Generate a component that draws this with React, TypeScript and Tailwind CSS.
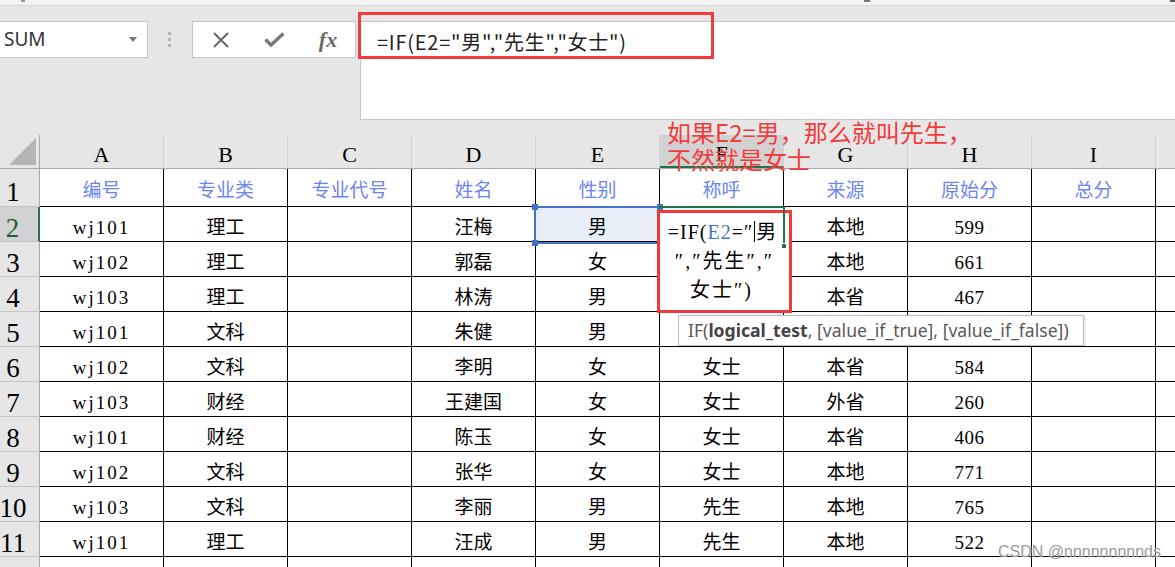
import React from 'react'

const SERIF = "font-['Liberation_Serif','Noto_Sans_CJK_SC',serif]"
const COLS = ['A', 'B', 'C', 'D', 'E', 'F', 'G', 'H', 'I']

const data: string[][] = [
  ['编号', '专业类', '专业代号', '姓名', '性别', '称呼', '来源', '原始分', '总分'],
  ['wj101', '理工', '', '汪梅', '男', '', '本地', '599', ''],
  ['wj102', '理工', '', '郭磊', '女', '', '本地', '661', ''],
  ['wj103', '理工', '', '林涛', '男', '', '本省', '467', ''],
  ['wj101', '文科', '', '朱健', '男', '先生', '本地', '512', ''],
  ['wj102', '文科', '', '李明', '女', '女士', '本省', '584', ''],
  ['wj103', '财经', '', '王建国', '女', '女士', '外省', '260', ''],
  ['wj101', '财经', '', '陈玉', '女', '女士', '本省', '406', ''],
  ['wj102', '文科', '', '张华', '女', '女士', '本地', '771', ''],
  ['wj103', '文科', '', '李丽', '男', '先生', '本地', '765', ''],
  ['wj101', '理工', '', '汪成', '男', '先生', '本地', '522', ''],
  ['wj102', '财经', '', '刘国庆', '女', '女士', '本省', '438', ''],
]

function TopBar() {
  return (
    <div className="bg-[#e6e6e6]">
      <div className="relative h-[6px] border-b border-[#d4d4d4] bg-[#f3f3f3]">
        <span className="absolute left-[21px] top-0 h-[2px] w-[4px] bg-[#9a9a9a]" />
        <span className="absolute left-[864px] top-0 h-[2px] w-[6px] bg-[#777]" />
        <span className="absolute left-[1170px] top-0 h-[2px] w-[5px] bg-[#555]" />
      </div>
      <div className="flex items-start pt-[15px]">
        {/* name box */}
        <div className="-ml-px flex h-[37px] w-[149px] items-center justify-between border border-[#c6c6c6] bg-white pl-[4px] pr-[10px]">
          <span className="font-['Noto_Sans',sans-serif] text-[19px] leading-none text-[#333]">SUM</span>
          <svg width="8" height="5" viewBox="0 0 8 5">
            <path d="M0 0h8L4 5z" fill="#7a7a7a" />
          </svg>
        </div>
        <div className="ml-[20px] mt-[11px] flex w-[4px] flex-col gap-[3px]">
          <span className="h-[3px] w-[3px] bg-[#b4b4b4]" />
          <span className="h-[3px] w-[3px] bg-[#b4b4b4]" />
          <span className="h-[3px] w-[3px] bg-[#b4b4b4]" />
        </div>
        {/* cancel / enter / fx */}
        <div className="ml-[20px] flex h-[37px] w-[164px] items-center border border-[#c6c6c6] bg-white">
          <div className="flex w-[54px] justify-center pl-[2px]">
            <svg width="18" height="16" viewBox="0 0 18 16">
              <path d="M2 1l14 14M16 1L2 15" stroke="#666" strokeWidth="2" />
            </svg>
          </div>
          <div className="flex w-[54px] justify-center">
            <svg width="21" height="15" viewBox="0 0 21 15">
              <path d="M1.5 7.5l5.5 5.5L19.5 1.5" stroke="#777" strokeWidth="3.4" fill="none" />
            </svg>
          </div>
          <div className="flex w-[54px] justify-center">
            <span className="font-['Liberation_Serif',serif] text-[22px] font-bold italic leading-none text-[#6a6a6a]">fx</span>
          </div>
        </div>
        {/* formula bar */}
        <div className="ml-[4px] h-[99px] flex-1 border border-r-0 border-[#c6c6c6] bg-white pl-[16px] pt-[5px]">
          <span className="font-['Noto_Sans_CJK_SC',sans-serif] text-[20px] tracking-[0.75px] text-[#222]">=IF(E2="男","先生","女士")</span>
        </div>
      </div>
      <div className="h-[15px]" />
    </div>
  )
}

function ColumnHeader() {
  return (
    <div className="flex h-[34px] border-b border-[#a9a9a9] bg-[#e6e6e6]">
      <div className="flex w-[40px] shrink-0 items-end justify-end border-r border-[#a9a9a9] pb-[3px] pr-[3px]">
        <svg width="27" height="27" viewBox="0 0 27 27">
          <path d="M27 0V27H0z" fill="#b5b5b5" />
        </svg>
      </div>
      {COLS.map((c) => (
        <div
          key={c}
          className={
            'flex w-[124px] shrink-0 items-center justify-center border-r border-[#d2d2d2] pt-[5px] text-[22px] text-black ' +
            SERIF +
            (c === 'F' ? ' border-b-2 border-b-[#217346] bg-[#d2d2d2]' : '')
          }
        >
          {c}
        </div>
      ))}
      <div className="flex-1" />
    </div>
  )
}

function Rows() {
  return (
    <div>
      {data.map((row, i) => {
        const n = i + 1
        const active = n === 2
        return (
          <div key={n} className={'flex ' + (n === 1 ? 'h-[38px]' : 'h-[35px]')}>
            <div
              className={
                'flex w-[40px] shrink-0 items-center justify-center border-b border-[#c4c4c4] pr-[13px] pt-[9px] text-[27px] leading-none ' +
                SERIF +
                (active
                  ? ' border-r-2 border-r-[#217346] bg-[#d2d2d2] text-[#1f5c3a]'
                  : ' border-r border-r-[#a9a9a9] bg-[#e6e6e6] text-black')
              }
            >
              {n}
            </div>
            {row.map((v, j) => (
              <div
                key={j}
                className={
                  'flex w-[124px] shrink-0 items-center justify-center border-b border-r border-black pt-[8px] text-[19px] ' +
                  SERIF +
                  (n === 1 ? ' text-[#6c85f2]' : ' text-black') +
                  (j === 0 && n > 1 ? ' tracking-[2px]' : '') +
                  (j === 7 && n > 1 ? ' tracking-[0.5px]' : '') +
                  (n === 2 && j === 4 ? ' bg-[#e8eef8]' : ' bg-white')
                }
              >
                {v}
              </div>
            ))}
            <div className="flex-1 border-b border-black bg-white" />
          </div>
        )
      })}
    </div>
  )
}

function Handle({ cls }: { cls: string }) {
  return <span className={'absolute h-[6px] w-[6px] bg-[#4472c4] ' + cls} />
}

export default function App() {
  return (
    <div className="relative h-[567px] w-[1175px] overflow-hidden bg-white">
      <TopBar />
      <ColumnHeader />
      <Rows />

      {/* range highlight for E2 */}
      <div className="absolute left-[534px] top-[206px] h-[38px] w-[127px] border-2 border-[#4472c4]">
        <Handle cls="-left-[4px] -top-[4px]" />
        <Handle cls="-right-[4px] -top-[4px]" />
        <Handle cls="-left-[4px] -bottom-[4px]" />
        <Handle cls="-right-[4px] -bottom-[4px]" />
      </div>

      {/* in-cell editor */}
      <div
        className={
          'absolute left-[657px] top-[210px] h-[103px] w-[135px] border-[3px] border-[#f03a3a] bg-white pt-[5px] text-center text-[20px] leading-[29px] tracking-[1px] text-black ' +
          SERIF
        }
      >
        <div className="pr-[4px]">
          =IF(<span className="text-[#4472c4]">E2</span>=″
          <span className="mx-px inline-block h-[21px] w-px bg-black align-[-3px]" />男
        </div>
        <div className="tracking-[2px]">″,″先生″,″</div>
        <div className="pr-[6px] tracking-[2px]">女士″)</div>
      </div>

      {/* active cell F2 border */}
      <div className="absolute left-[659px] top-[206px] h-[39px] w-[126px] border-r-2 border-t-2 border-[#217346]">
        <span className="absolute -right-[4px] -bottom-[4px] h-[6px] w-[6px] border border-white bg-[#217346]" />
      </div>

      {/* tooltip */}
      <div className="absolute left-[678px] top-[315px] flex h-[31px] w-[406px] items-center border border-[#bdbdbd] bg-white pl-[9px] font-['Noto_Sans',sans-serif] text-[17.6px] text-[#595959] shadow-[1px_1px_2px_rgba(0,0,0,0.15)]">
        IF(<b className="text-[#444]">logical_test</b>, [value_if_true], [value_if_false])
      </div>

      {/* red formula frame */}
      <div className="absolute left-[358px] top-[12px] h-[47px] w-[356px] border-[3px] border-[#f33b3b]" />

      {/* annotation */}
      <div className="absolute left-[667px] top-[118px] font-['Noto_Sans_CJK_SC',sans-serif] text-[24px] leading-[27px] text-[#f23c3c]">
        <div>如果E2=男，那么就叫先生，</div>
        <div>不然就是女士</div>
      </div>

      {/* watermark */}
      <div className="absolute left-[998px] top-[540px] font-['Liberation_Sans',sans-serif] text-[16px] text-[#9a9a9a] [text-shadow:0_0_2px_#fff]">
        CSDN @nnnnnnnnnds
      </div>
    </div>
  )
}
